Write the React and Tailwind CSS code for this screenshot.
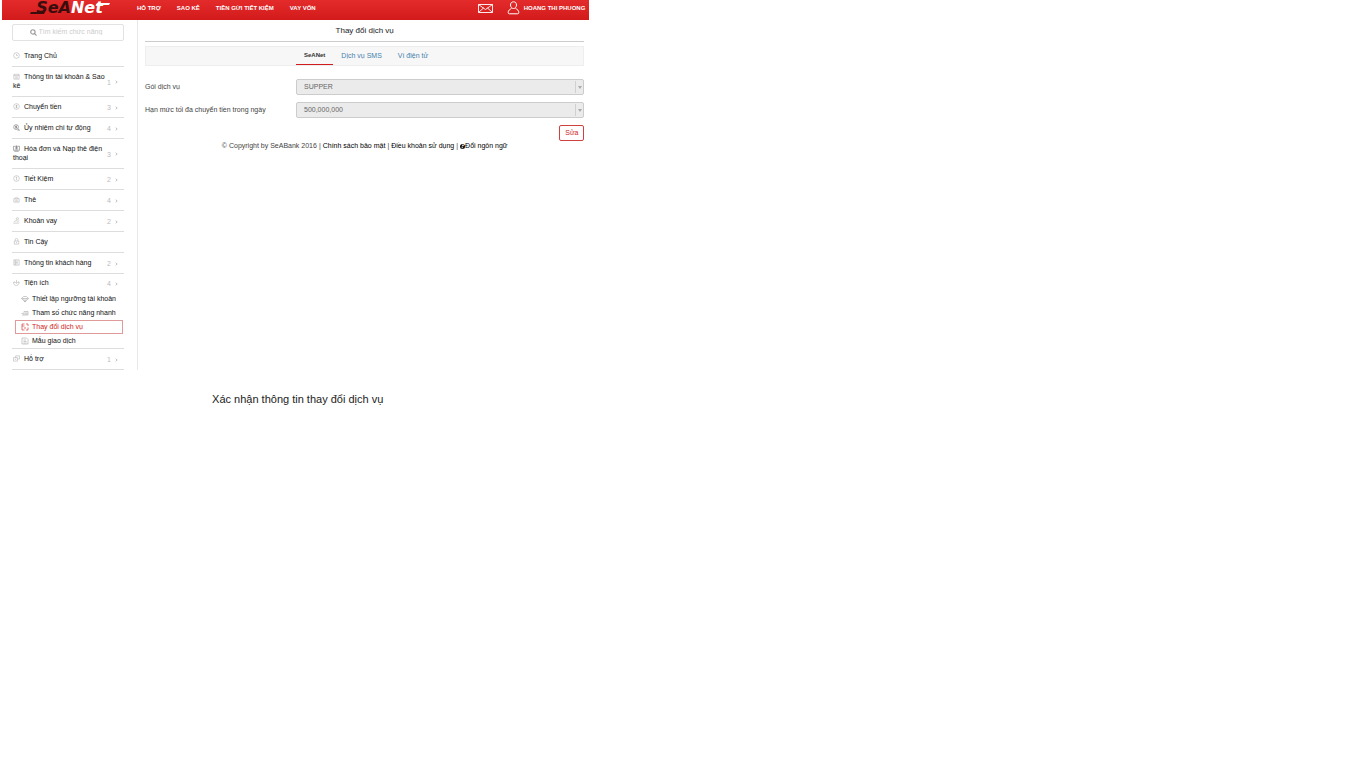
const ICONS = {
  clock: (
    <>
      <circle cx="8" cy="8" r="6.5" />
      <path d="M8 4.5V8h3" />
    </>
  ),
  account: (
    <>
      <path d="M2 3h12v11H2zM2 6h12" />
      <path d="M5 9h6M5 11.500h6" />
    </>
  ),
  transfer: (
    <>
      <circle cx="8" cy="8" r="6.500" />
      <path d="M8 4v8M10 5.500H7a1.500 1.500 0 0 0 0 2.500h2a1.500 1.500 0 0 1 0 2.500H6" />
    </>
  ),
  order: (
    <>
      <circle cx="7" cy="7" r="5.500" />
      <path d="M7 4v6M9 5H6v2h2.500v2H5M10 14h5M11 11l4 3" />
    </>
  ),
  bill: (
    <>
      <path d="M1 3h14v9H1zM3 14.500h10" />
      <path d="M8 1v9M5 6h6M4 9h8" />
    </>
  ),
  saving: (
    <>
      <circle cx="8" cy="8" r="6.500" />
      <path d="M8 4v8M6.500 5.500H8" />
    </>
  ),
  card: (
    <>
      <path d="M2 6h12v8H2zM4 6l4-4 4 4" />
      <path d="M5 9h6M5 11.500h6" />
    </>
  ),
  loan: (
    <>
      <path d="M1 14h13M2 11l5-3 3 2 4-1" />
      <circle cx="10" cy="4" r="2.500" />
    </>
  ),
  trust: <path d="M3 7h10v7H3zM5 7V4a3 3 0 0 1 6 0v3M8 9v3" />,
  customer: (
    <>
      <path d="M2 2h12v12H2z" />
      <path d="M5 5h6M5 8h6M5 11h6M5 2v12" />
    </>
  ),
  utility: (
    <>
      <path d="M3 5a6 6 0 1 0 9 0M8 2v8M5 7l3 3 3-3" />
      <path d="M1 8h3M12 8h3" />
    </>
  ),
  diamond: <path d="M1 7l4-4h6l4 4-7 7zM1 7h14M5 7l3 7 3-7" />,
  quick: <path d="M1 9h4M2 12h4M6 5h8v7H6zM8 8h5M8 10h5" />,
  swap: <path d="M7 2H2v12h5M2 6h5M10 2h4v4M14 9v5h-4M6 10h4" />,
  template: (
    <>
      <path d="M2 2h9l3 3v9H2z" />
      <path d="M5 6h5M5 9h6M5 12h6" />
    </>
  ),
  help: <path d="M1 6h9v8H1zM6 6V2h9v7h-5M4 10h3" />,
};

const MENU = [
  { icon: 'clock', label: 'Trang Chủ' },
  { icon: 'account', label: 'Thông tin tài khoản & Sao kê', count: 1 },
  { icon: 'transfer', label: 'Chuyển tiền', count: 3 },
  { icon: 'order', label: 'Ủy nhiệm chi tự động', count: 4, dark: true },
  { icon: 'bill', label: 'Hóa đơn và Nạp thẻ điện thoại', count: 3, dark: true },
  { icon: 'saving', label: 'Tiết Kiệm', count: 2 },
  { icon: 'card', label: 'Thẻ', count: 4 },
  { icon: 'loan', label: 'Khoản vay', count: 2 },
  { icon: 'trust', label: 'Tin Cậy' },
  { icon: 'customer', label: 'Thông tin khách hàng', count: 2 },
  {
    icon: 'utility',
    label: 'Tiện ích',
    count: 4,
    children: [
      { icon: 'diamond', label: 'Thiết lập ngưỡng tài khoản' },
      { icon: 'quick', label: 'Tham số chức năng nhanh' },
      { icon: 'swap', label: 'Thay đổi dịch vụ', active: true },
      { icon: 'template', label: 'Mẫu giao dịch' },
    ],
  },
  { icon: 'help', label: 'Hỗ trợ', count: 1 },
];

const NAV = ['HỖ TRỢ', 'SAO KÊ', 'TIỀN GỬI TIẾT KIỆM', 'VAY VỐN'];

function Icon({ name, className }) {
  return (
    <svg viewBox="0 0 16 16" fill="none" stroke="currentColor" strokeWidth="1.2" className={className} aria-hidden="true">
      {ICONS[name]}
    </svg>
  );
}

function Logo() {
  return (
    <a href="#" className="relative block w-20 text-center font-['DejaVu_Sans',sans-serif] text-[16px] font-bold italic leading-4">
      <svg viewBox="0 0 80 16" className="absolute inset-0 h-4 w-20" fill="none" aria-hidden="true">
        <path d="M1 12h14l-1 2H0z" fill="#3a0d0d" />
        <path d="M67 3h13l-1 2H66z" fill="#fff" />
      </svg>
      <span className="text-[#3a0d0d]">SeA</span>
      <span className="text-white">Net</span>
    </a>
  );
}

function Header() {
  return (
    <header className="flex h-5 items-start bg-linear-to-b from-[#e32b2b] to-[#d31a1a] text-[6px] font-bold leading-4 text-white">
      <div className="flex w-[135px] shrink-0 justify-center">
        <Logo />
      </div>
      <nav className="flex gap-4">
        {NAV.map((item) => (
          <a key={item} href="#" className="whitespace-nowrap">
            {item}
          </a>
        ))}
      </nav>
      <div className="ml-auto flex items-start pr-1">
        <a href="#" aria-label="Hộp thư" className="mt-1 mr-[14px]">
          <svg viewBox="0 0 15 9" className="h-[9px] w-[15px]" fill="none" stroke="#fff" strokeWidth="0.9">
            <path d="M.5.5h14v8H.5zL7.500 5.500 14.500.5M.5 8.500 5.500 4M14.500 8.500l-5-4.500" />
          </svg>
        </a>
        <a href="#" className="flex gap-1 whitespace-nowrap">
          <svg viewBox="0 0 13 14" className="mt-px h-[14px] w-[13px]" fill="none" stroke="#fff" strokeWidth="1" aria-hidden="true">
            <path d="M6.500.8c2 0 3 1.400 3 3.200S8.300 7.500 6.500 7.500 3.500 5.800 3.500 4s1-3.200 3-3.200zM4.500 7.500C2.500 8.500 1.200 9.500 1.200 11.500q0 1.300 1.300 1.300h8q1.300 0 1.300-1.300c0-2-1.300-3-3.300-4" />
          </svg>
          HOANG THI PHUONG
        </a>
      </div>
    </header>
  );
}

function MenuItem({ item }) {
  return (
    <li className="border-b border-[#ddd]">
      <a
        href="#"
        className={
          item.children
            ? 'flex items-center justify-between pt-1 pb-[5px] pl-px pr-[6px]'
            : 'flex items-center justify-between pt-[5px] pb-[6px] pl-px pr-[6px]'
        }
      >
        <span className="w-[93px] shrink-0 leading-[9px]">
          <Icon
            name={item.icon}
            className={
              item.dark
                ? 'mr-1 inline h-[7px] w-[7px] align-text-bottom text-[#666]'
                : 'mr-1 inline h-[7px] w-[7px] align-text-bottom text-[#aaa]'
            }
          />
          {item.label}
        </span>
        {item.count && (
          <span className="flex items-center gap-1 pt-0.5 leading-[7px] text-[#bbb]">
            {item.count}
            <svg viewBox="0 0 4 6" className="h-1 w-[3px]" fill="none" stroke="#999" aria-hidden="true">
              <path d="M1 1l2 2-2 2" />
            </svg>
          </span>
        )}
      </a>
      {item.children && (
        <ul>
          {item.children.map((child) => (
            <li key={child.label}>
              <a
                href="#"
                className={
                  child.active
                    ? 'mr-px ml-[3px] flex h-[14px] items-center gap-[3px] border border-[#e09a9a] pl-[5px] text-[#d01c1c]'
                    : 'mr-px ml-[3px] flex h-[14px] items-center gap-[3px] border border-transparent pl-[5px]'
                }
              >
                <Icon
                  name={child.icon}
                  className={child.active ? 'h-2 w-2' : 'h-2 w-2 text-[#aaa]'}
                />
                <span className="whitespace-nowrap">{child.label}</span>
              </a>
            </li>
          ))}
        </ul>
      )}
    </li>
  );
}

function Sidebar() {
  return (
    <aside className="w-[136px] shrink-0 border-r border-[#e8e8e8] pt-1 pr-[13px] pl-[10px] text-[7px] text-[#111]">
      <label className="mb-[5px] flex h-[17px] items-center justify-center gap-0.5 rounded-xs border border-[#e2e2e2]">
        <svg viewBox="0 0 8 8" className="h-[7px] w-[7px]" fill="none" stroke="#999" strokeWidth="1.3" aria-hidden="true">
          <circle cx="3.300" cy="3.300" r="2.500" />
          <path d="M5 5l2.500 2.500" />
        </svg>
        <input
          type="text"
          aria-label="Tìm kiếm chức năng"
          placeholder="Tìm kiếm chức năng"
          className="w-[68px] outline-none placeholder:text-[#ccc]"
        />
      </label>
      <ul>
        {MENU.map((item) => (
          <MenuItem key={item.label} item={item} />
        ))}
      </ul>
    </aside>
  );
}

function SelectRow({ id, label, value }) {
  return (
    <div className="flex items-center">
      <label htmlFor={id} className="w-[151px] shrink-0">
        {label}
      </label>
      <div className="relative flex-1">
        <select
          id={id}
          disabled
          className="block h-4 w-full appearance-none rounded-xs border border-[#ccc] bg-[#ebebeb] pl-[7px] text-[#666] opacity-100"
        >
          <option>{value}</option>
        </select>
        <span className="pointer-events-none absolute inset-y-[2px] right-px flex w-2 items-center justify-center border-l border-[#d0d0d0]">
          <svg viewBox="0 0 4 3" className="h-[3px] w-1" fill="#aaa" aria-hidden="true">
            <path d="M0 0h4L2 3z" />
          </svg>
        </span>
      </div>
    </div>
  );
}

function Footer() {
  return (
    <footer className="flex justify-center gap-0.5 text-[7px] leading-[10px] whitespace-nowrap text-[#444]">
      <span>© Copyright by SeABank 2016</span>|
      <a href="#" className="text-black">Chính sách bảo mật</a>|
      <a href="#" className="text-black">Điều khoản sử dụng</a>|
      <a href="#" className="flex items-center text-black">
        <svg viewBox="0 0 10 10" className="h-[5px] w-[5px]" aria-hidden="true">
          <circle cx="5" cy="5" r="5" fill="#111" />
          <path d="M5 1l3 1-2 3-2-1zM3 5l3 2-2 2z" fill="#fff" />
        </svg>
        Đổi ngôn ngữ
      </a>
    </footer>
  );
}

export default function App() {
  return (
    <div className="min-h-screen bg-white font-['Liberation_Sans',sans-serif]">
      <div className="ml-0.5 w-[43%] min-w-[587px]">
        <Header />
        <div className="flex">
          <Sidebar />
          <main className="flex-1 pr-[5px] pl-[7px] text-[7px] text-[#444]">
            <h1 className="border-b border-[#ccc] pt-[5px] pb-1 text-center text-[8px] leading-3 text-[#222]">
              Thay đổi dịch vụ
            </h1>
            <div role="tablist" className="mt-1 flex h-5 border border-[#eee] bg-[#f7f7f7] pl-[150px] text-[#4681ad]">
              <button role="tab" aria-selected="true" className="border-b border-[#d01c1c] px-2 text-[6px] font-bold text-[#333]">
                SeANet
              </button>
              <button role="tab" aria-selected="false" className="ml-2">
                Dịch vụ SMS
              </button>
              <button role="tab" aria-selected="false" className="ml-4">
                Ví điện tử
              </button>
            </div>
            <form className="mt-[13px] flex flex-col gap-[7px]">
              <SelectRow id="package" label="Gói dịch vụ" value="SUPPER" />
              <SelectRow id="limit" label="Hạn mức tối đa chuyển tiền trong ngày" value="500,000,000" />
              <button type="button" className="h-4 w-[25px] self-end rounded-xs border border-[#cf4040] text-[#d01c1c]">
                Sửa
              </button>
            </form>
            <Footer />
          </main>
        </div>
        <h2 className="mt-[21px] pl-1 text-center text-[11px] leading-4 text-[#222]">
          Xác nhận thông tin thay đổi dịch vụ
        </h2>
      </div>
    </div>
  );
}
